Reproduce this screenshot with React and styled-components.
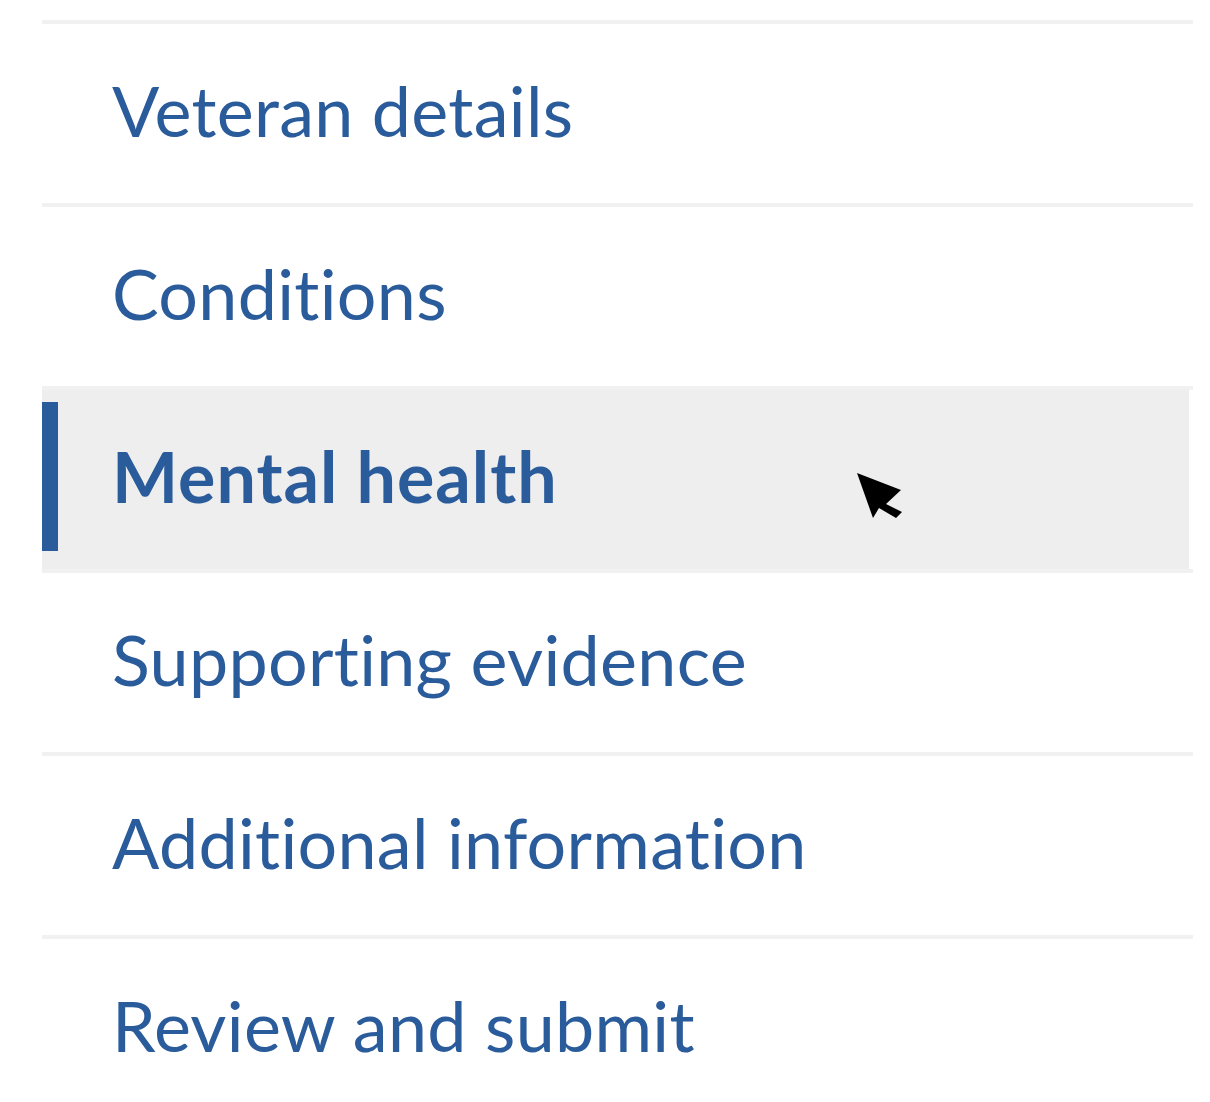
import React from 'react';
import styled, { createGlobalStyle } from 'styled-components';

const GlobalStyle = createGlobalStyle`
  html, body {
    margin: 0;
    padding: 0;
    background: #ffffff;
    overflow: hidden;
  }
  body {
    font-family: Lato, "Open Sans", sans-serif;
  }
`;

const Page = styled.div`
  position: relative;
  padding: 20px 17px 0 42px;
`;

const NavList = styled.ul`
  list-style: none;
  margin: 0;
  padding: 0;
`;

const NavItem = styled.li`
  border-top: 4px solid #f1f1f1;
  margin: 0;
  padding: 0;
`;

const NavLink = styled.a`
  display: flex;
  align-items: stretch;
  height: 179px;
  margin-right: ${(p) => (p.$active ? '4px' : '0')};
  background: ${(p) => (p.$active ? '#eeeeee' : 'transparent')};
  color: #2a5b9b;
  text-decoration: none;
  cursor: pointer;
`;

const ActiveBar = styled.span`
  flex: 0 0 16px;
  margin: 12px 0 18px 0;
  background: ${(p) => (p.$show ? '#2a5b9b' : 'transparent')};
`;

const Label = styled.span`
  padding: 44px 0 0 54px;
  font-size: 70px;
  line-height: 1.2;
  font-weight: ${(p) => (p.$active ? 700 : 400)};
  letter-spacing: ${(p) => (p.$active ? '1px' : '0.3px')};
  font-variant-ligatures: none;
  white-space: nowrap;
`;

const Cursor = styled.svg`
  position: absolute;
  left: 857px;
  top: 473px;
  width: 48px;
  height: 48px;
  pointer-events: none;
`;

const steps = [
  'Veteran details',
  'Conditions',
  'Mental health',
  'Supporting evidence',
  'Additional information',
  'Review and submit',
];

const activeIndex = 2;

const App = () => {
  return (
    <>
      <GlobalStyle />
      <Page>
        <NavList>
          {steps.map((step, i) => (
            <NavItem key={step}>
              <NavLink $active={i === activeIndex}>
                <ActiveBar $show={i === activeIndex} />
                <Label $active={i === activeIndex}>{step}</Label>
              </NavLink>
            </NavItem>
          ))}
        </NavList>
        <Cursor viewBox="0 0 48 48">
          <path d="M0 0 L16 45 L22 35 L39 45 L45 39 L29 31 L44 17 Z" fill="#000" />
        </Cursor>
      </Page>
    </>
  );
};

export default App;
